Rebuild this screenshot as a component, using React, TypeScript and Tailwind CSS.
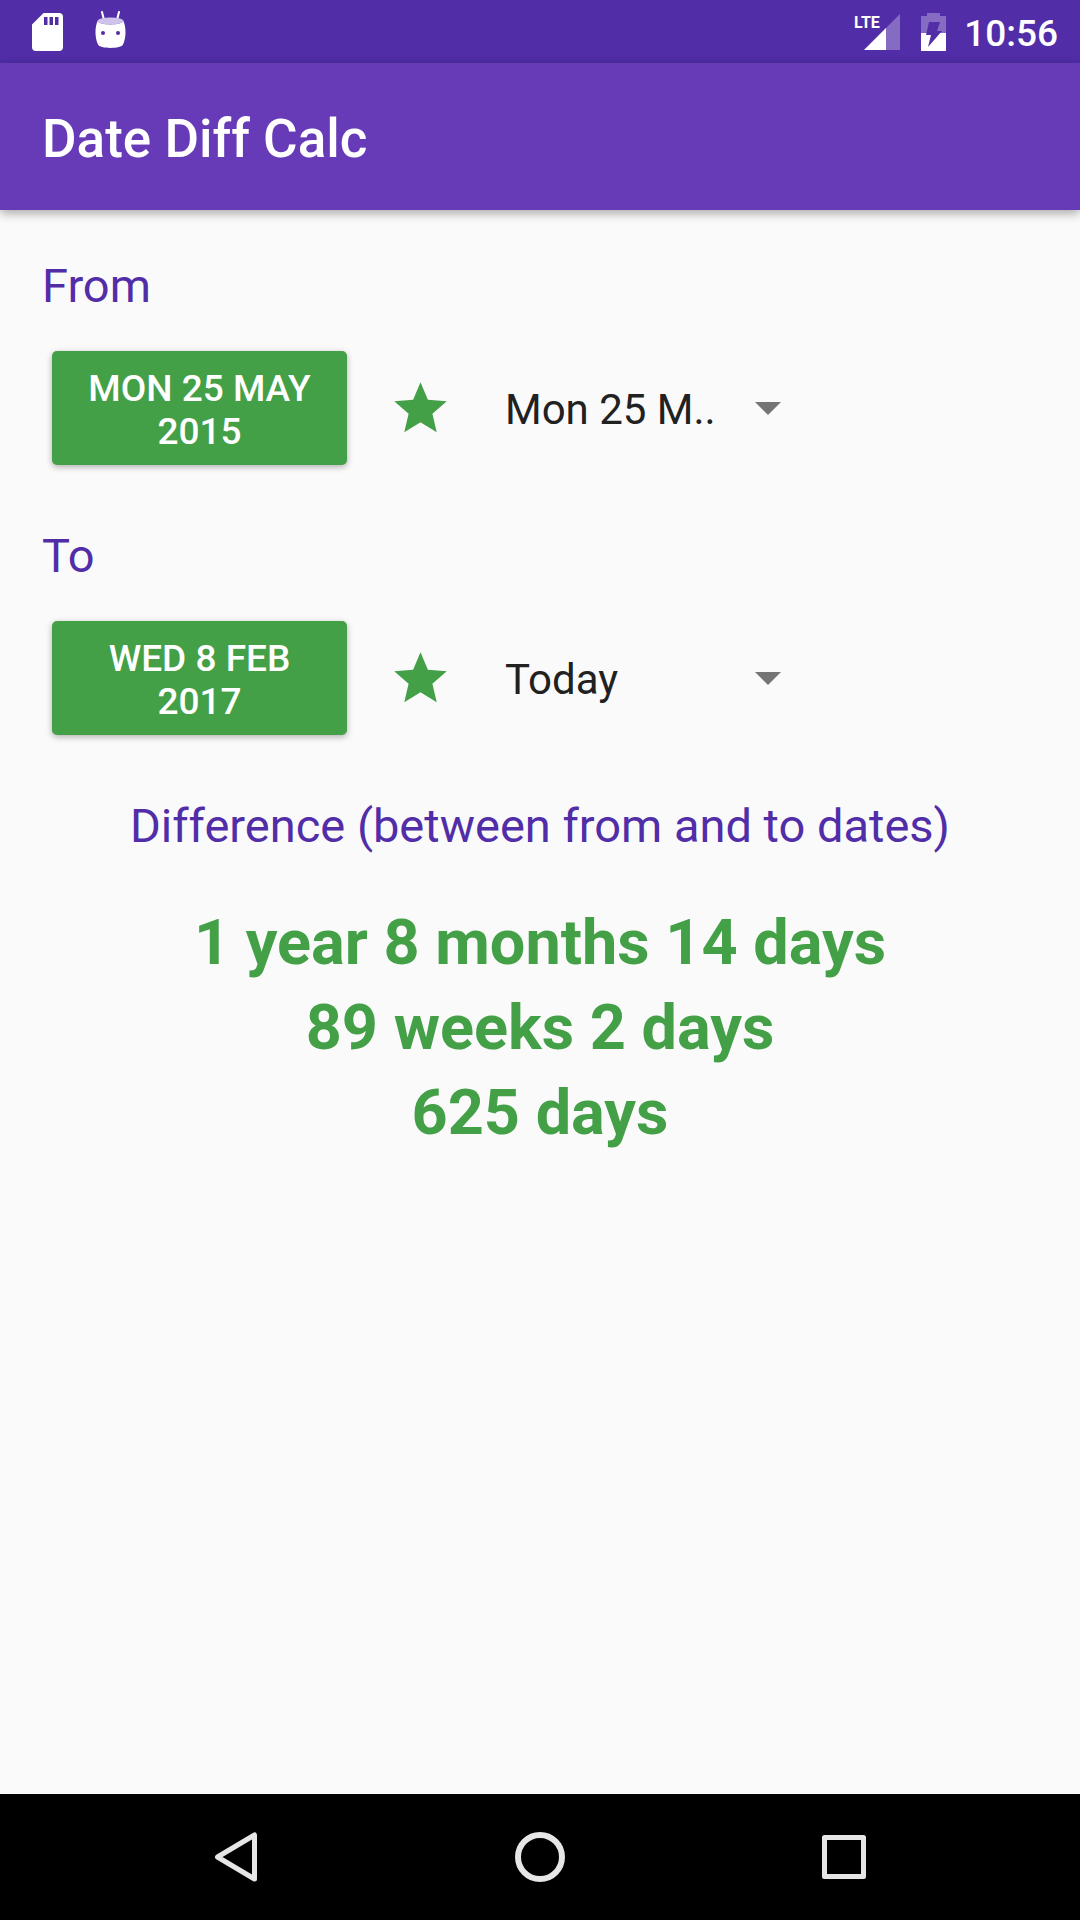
import { useState } from "react";

const presets = ["Today", "Mon 25 M.."];

function StatusBar() {
  return (
    <div className="flex h-[63px] items-center justify-between bg-[#512da8] pr-[22px] pl-8 text-white">
      <div className="flex items-center gap-8">
        <svg width="31" height="38" viewBox="0 0 31 38" aria-hidden="true">
          <path
            fill="currentColor"
            fillRule="evenodd"
            d="M11.5 0H27a4 4 0 0 1 4 4v30a4 4 0 0 1-4 4H4a4 4 0 0 1-4-4V11.5zM12 4v8h3.500V4zM17.500 4v8H21V4zM23 4v8h3.500V4z"
          />
        </svg>
        <svg width="31" height="38" viewBox="0 0 31 38" className="mb-1" aria-hidden="true">
          <path d="M7 1l2 8M24 1l-2 8" stroke="currentColor" strokeWidth="2" strokeLinecap="round" />
          <path
            fill="currentColor"
            d="M2.500 10C4 14.500 27 14.500 28.500 10c2.500 6 3 16-.5 23.500C26.500 38 4.500 38 3 33.500-.5 26 0 16 2.500 10z"
          />
          <ellipse cx="15.5" cy="10" rx="13" ry="3.5" fill="#cfc3ea" />
          <circle cx="8" cy="22" r="2" fill="#512da8" />
          <circle cx="23" cy="22" r="2" fill="#512da8" />
        </svg>
      </div>
      <div className="flex items-center">
        <svg width="46" height="38" viewBox="0 0 46 38" className="mr-[21px]" aria-label="LTE signal">
          <path d="M46 1v36H10z" fill="currentColor" opacity="0.3" />
          <path d="M32 15v22H10z" fill="currentColor" />
          <text x="0" y="15" fill="currentColor" className="font-['Liberation_Sans_Narrow',Roboto,sans-serif] text-[16px] font-bold">
            LTE
          </text>
        </svg>
        <svg width="25" height="38" viewBox="0 0 25 38" className="mr-[18px]" aria-label="Battery charging">
          <path d="M6 0h13v3h6v17H0V3h6z" fill="currentColor" opacity="0.3" />
          <path d="M0 20h25v18H0z" fill="currentColor" />
          <path d="M8 9h11l-3 9h5L7 34l3-12H5z" fill="#512da8" />
        </svg>
        <span className="pt-1 text-[37px] leading-[43px] font-medium">10:56</span>
      </div>
    </div>
  );
}

type DateFieldProps = {
  id: string;
  label: string;
  date: string;
  initialPreset: string;
};

function DateField({ id, label, date, initialPreset }: DateFieldProps) {
  const [preset, setPreset] = useState(initialPreset);

  return (
    <section className="mb-[63px]">
      <label htmlFor={id} className="mb-[37px] block text-[47px] leading-[56px] text-[#512da8]">
        {label}
      </label>
      <div className="flex items-center pl-[10px]">
        <button className="w-[295px] rounded-[5px] bg-[#43a047] px-8 pt-4 pb-3 text-center text-[37px] leading-[43px] font-medium text-white uppercase shadow-[0_2px_6px_rgba(0,0,0,0.3)]">
          {date}
        </button>
        <button aria-label={`Save ${label} date`} className="ml-[42px] text-[#43a047]">
          <svg width="63" height="63" viewBox="0 0 24 24" fill="currentColor">
            <path d="M12 17.270L18.180 21l-1.640-7.030L22 9.240l-7.190-.61L12 2 9.190 8.630 2 9.240l5.460 4.730L5.820 21z" />
          </svg>
        </button>
        <div className="relative ml-[53px]">
          <select
            id={id}
            value={preset}
            onChange={(e) => setPreset(e.target.value)}
            className="w-[284px] appearance-none bg-transparent pt-1 text-[42px] leading-[50px] text-[#212121]"
          >
            {presets.map((item) => (
              <option key={item}>{item}</option>
            ))}
          </select>
          <svg
            width="26"
            height="13"
            viewBox="0 0 26 13"
            className="pointer-events-none absolute inset-y-0 right-2 my-auto"
          >
            <path d="M0 0h26L13 13z" fill="#757575" />
          </svg>
        </div>
      </div>
    </section>
  );
}

function NavigationBar() {
  return (
    <nav className="flex h-[126px] bg-black px-[84px] text-[#e6e6e6]">
      <button aria-label="Back" className="flex flex-1 items-center justify-center">
        <svg width="50" height="50" viewBox="0 0 50 50" fill="none" stroke="currentColor" strokeWidth="5" strokeLinejoin="round">
          <path d="M43.500 3v44L6.500 25z" />
        </svg>
      </button>
      <button aria-label="Home" className="flex flex-1 items-center justify-center">
        <svg width="50" height="50" viewBox="0 0 50 50" fill="none" stroke="currentColor" strokeWidth="6">
          <circle cx="25" cy="25" r="22" />
        </svg>
      </button>
      <button aria-label="Recent apps" className="flex flex-1 items-center justify-center">
        <svg width="50" height="50" viewBox="0 0 50 50" fill="none" stroke="currentColor" strokeWidth="5" strokeLinejoin="round">
          <path d="M5.500 5.500h39v39h-39z" />
        </svg>
      </button>
    </nav>
  );
}

export default function App() {
  return (
    <div className="flex min-h-screen flex-col bg-[#fafafa] font-[Roboto,sans-serif]">
      <StatusBar />
      <header className="flex h-[147px] items-center bg-[#673ab7] px-[42px] pt-1 shadow-[0_3px_10px_rgba(0,0,0,0.35)]">
        <h1 className="text-[53px] leading-[62px] font-medium text-white">Date Diff Calc</h1>
      </header>
      <main className="flex-1 px-[42px] pt-12">
        <DateField id="from" label="From" date="Mon 25 May 2015" initialPreset="Mon 25 M.." />
        <DateField id="to" label="To" date="Wed 8 Feb 2017" initialPreset="Today" />
        <section className="text-center">
          <h2 className="mb-[46px] text-[47px] leading-[56px] text-[#512da8]">
            Difference (between from and to dates)
          </h2>
          <div className="text-[63px] leading-[85px] font-bold text-[#43a047]">
            <p>1 year 8 months 14 days</p>
            <p>89 weeks 2 days</p>
            <p>625 days</p>
          </div>
        </section>
      </main>
      <NavigationBar />
    </div>
  );
}
